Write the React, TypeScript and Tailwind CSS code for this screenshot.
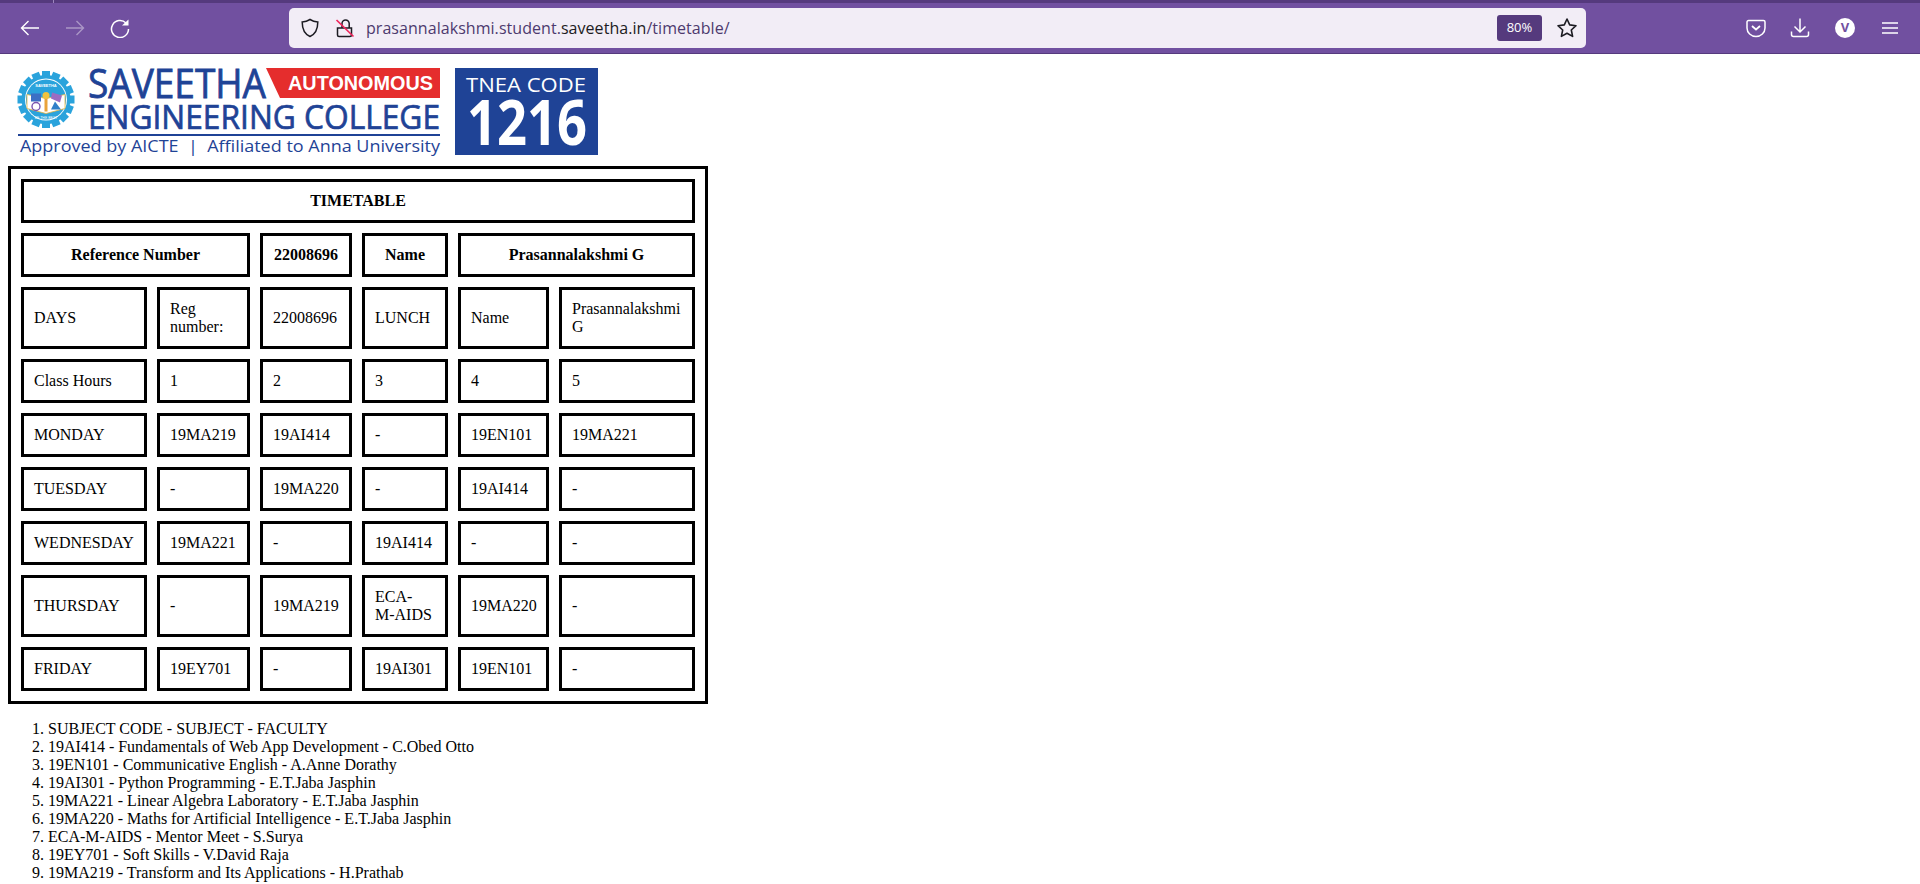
import React from "react";

const rows: React.ReactNode[][] = [
  ["DAYS", "Reg number:", "22008696", "LUNCH", "Name", "Prasannalakshmi G"],
  ["Class Hours", "1", "2", "3", "4", "5"],
  ["MONDAY", "19MA219", "19AI414", "-", "19EN101", "19MA221"],
  ["TUESDAY", "-", "19MA220", "-", "19AI414", "-"],
  ["WEDNESDAY", "19MA221", "-", "19AI414", "-", "-"],
  ["THURSDAY", "-", "19MA219", <>ECA-<br />M-AIDS</>, "19MA220", "-"],
  ["FRIDAY", "19EY701", "-", "19AI301", "19EN101", "-"],
];
const subjects = [
  "SUBJECT CODE - SUBJECT - FACULTY",
  "19AI414 - Fundamentals of Web App Development - C.Obed Otto",
  "19EN101 - Communicative English - A.Anne Dorathy",
  "19AI301 - Python Programming - E.T.Jaba Jasphin",
  "19MA221 - Linear Algebra Laboratory - E.T.Jaba Jasphin",
  "19MA220 - Maths for Artificial Intelligence - E.T.Jaba Jasphin",
  "ECA-M-AIDS - Mentor Meet - S.Surya",
  "19EY701 - Soft Skills - V.David Raja",
  "19MA219 - Transform and Its Applications - H.Prathab",
];
const td = "border-[3px] border-black pl-[10px] pr-[8px] py-[10px] leading-[18px] text-left align-middle";
const th = "border-[3px] border-black px-[8px] py-[10px] leading-[18px] text-center align-middle font-bold";

function Back({ className = "" }: { className?: string }) {
  return (
    <svg width="20" height="20" viewBox="0 0 20 20" fill="none" stroke="currentColor" strokeWidth="1.4" className={className}>
      <path d="M19 10H1.500M8.500 3l-7 7 7 7" />
    </svg>
  );
}

function Logo() {
  const blue = "#1f4396";
  const sky = "#2aa3dc";
  const teeth = Array.from({ length: 16 }, (_, i) => (360 / 16) * i);
  return (
    <svg width="600" height="100" viewBox="0 0 600 100" className="block overflow-visible">
      <g transform="translate(31 33.500)">
        {teeth.map((a) => (
          <rect key={a} x="-4" y="-28.500" width="8" height="8" fill={sky} transform={`rotate(${a})`} />
        ))}
        <circle r="24.500" fill={sky} />
        <circle r="21" fill="#ffffff" />
        <circle r="20" fill={sky} />
        <path d="M-19 -5 L0 -1 L19 -5 L19 9 L0 14 L-19 9Z" fill="#ffffff" stroke="#e9b53f" strokeWidth="0.800" />
        <rect x="-15" y="-6" width="10" height="8" fill="#3c6fc4" />
        <path d="M6 -7l10 3-2 7-9-4z" fill="#9b6cc2" />
        <path d="M-1.500 -3h3v15h-3z" fill="#e9a33a" />
        <circle cy="-4" r="3.500" fill="#f0c23d" />
        <circle cx="-10" cy="7" r="4" fill="none" stroke="#7a55b0" strokeWidth="1.400" />
        <path d="M9 2l6 8H5z" fill="#2f7fc9" />
        <text x="0" y="-13" textAnchor="middle" fontFamily="'Liberation Sans',sans-serif" fontWeight="700" fontSize="4" fill="#fff">SAVEETHA</text>
        <text x="0" y="19" textAnchor="middle" fontFamily="'Liberation Sans',sans-serif" fontSize="3.500" fill="#fff">BE THE BEST</text>
      </g>
      <text x="73" y="32" fontFamily="'Open Sans',sans-serif" fontSize="40" fill={blue} stroke={blue} strokeWidth="0.800" textLength="178" lengthAdjust="spacingAndGlyphs">SAVEETHA</text>
      <path d="M251 2H425V32H265Z" fill="#e52d2d" />
      <text x="273" y="24" fontFamily="'Liberation Sans',sans-serif" fontWeight="700" fontSize="20" fill="#fff" textLength="145" lengthAdjust="spacingAndGlyphs">AUTONOMOUS</text>
      <text x="73" y="63" fontFamily="'Open Sans',sans-serif" fontSize="33" fill={blue} stroke={blue} strokeWidth="0.700" textLength="352" lengthAdjust="spacingAndGlyphs">ENGINEERING COLLEGE</text>
      <rect x="3" y="68" width="422" height="2" fill={blue} />
      <text x="5" y="86" fontFamily="'Open Sans',sans-serif" fontSize="16" fill={blue} textLength="420" lengthAdjust="spacingAndGlyphs">{"Approved by AICTE\u00a0\u00a0|\u00a0\u00a0Affiliated to Anna University"}</text>
      <rect x="440" y="2" width="143" height="87" fill={blue} />
      <text x="451" y="26" fontFamily="'Open Sans',sans-serif" fontSize="20" fill="#fff" textLength="120" lengthAdjust="spacingAndGlyphs">TNEA CODE</text>
      <text x="452" y="79" fontFamily="'Open Sans',sans-serif" fontWeight="700" fontSize="63" fill="#fff" textLength="120" lengthAdjust="spacingAndGlyphs">1216</text>
    </svg>
  );
}

export default function App() {
  return (
    <div className="h-[884px] overflow-hidden bg-white font-['Liberation_Serif',serif] text-[16px] text-black">
      <header className="h-[54px] bg-[#7150a0] border-t-[3px] border-t-[#553a7d] border-b border-b-[#553a7d] flex items-center font-['Open_Sans',sans-serif] relative">
        <div className="absolute left-[53px] top-[-3px] h-[3px] w-px bg-[#9c86bd]" />
        <div className="w-[289px] pl-[20px] flex items-center text-white">
          <Back />
          <Back className="ml-[25px] rotate-180 opacity-40" />
          <svg width="20" height="20" viewBox="0 0 20 20" fill="none" stroke="currentColor" strokeWidth="1.5" className="ml-[25px]">
            <path d="M16 5A8.500 8.500 0 1 0 18.500 11" />
            <path d="M12 7.500H18.500V1.500z" fill="currentColor" stroke="none" />
          </svg>
        </div>
        <div className="w-[1297px] h-[40px] rounded-[5px] bg-[#f2edf6] flex items-center pl-[11px] text-[16px] text-[#4d3a6e]">
          <svg width="20" height="20" viewBox="0 0 20 20" fill="none" stroke="#1c1b22" strokeWidth="1.5">
            <path d="M10 1.500c2.500 1.600 4.800 2.300 7.800 2.500 0 7-1.700 11.800-7.800 14.500C3.900 15.800 2.200 11 2.200 4c3-.2 5.300-.9 7.800-2.500z" />
          </svg>
          <svg width="20" height="20" viewBox="0 0 20 20" fill="none" stroke="#1c1b22" strokeWidth="1.500" className="ml-[15px]">
            <path d="M2.500 10h14v7a1.500 1.500 0 0 1-1.500 1.500H4A1.500 1.500 0 0 1 2.500 17zM7 10V5.500a3.600 3.600 0 0 1 7.200 0V10" />
            <path d="M1.500 2L18.500 18.500" stroke="#f0245a" strokeWidth="1.700" />
          </svg>
          <span className="ml-[11px] whitespace-nowrap tracking-[0.05px]">
            prasannalakshmi.student.<span className="text-[#1c1b22]">saveetha.in</span>/timetable/
          </span>
          <div className="ml-auto h-[26px] w-[45px] rounded-[3px] bg-[#553a7d] text-white text-[13px] flex items-center justify-center">80%</div>
          <svg width="22" height="22" viewBox="0 0 22 22" fill="none" stroke="#1c1b22" strokeWidth="1.600" className="ml-[14px] mr-[8px]">
            <path d="M11 2l2.700 5.900 6.300.8-4.700 4.300 1.300 6.400L11 16.200l-5.600 3.200 1.300-6.400L2 8.700l6.300-.8z" strokeLinejoin="round" />
          </svg>
        </div>
        <div className="flex-1 flex items-center text-white pl-[160px]">
          <svg width="20" height="20" viewBox="0 0 20 20" fill="none" stroke="currentColor" strokeWidth="1.500">
            <path d="M2.500 2.500h15a1.500 1.500 0 0 1 1.500 1.500v6a9 8.500 0 0 1-18 0V4a1.500 1.500 0 0 1 1.500-1.500z" />
            <path d="M6 8l4 3.500L14 8" strokeWidth="1.800" />
          </svg>
          <svg width="20" height="20" viewBox="0 0 20 20" fill="none" stroke="currentColor" strokeWidth="1.500" className="ml-[24px]">
            <path d="M10 0.500v13M4.500 8.500l5.500 5.500 5.500-5.500M1.500 13.500v3a2 2 0 0 0 2 2h13a2 2 0 0 0 2-2v-3" />
          </svg>
          <div className="ml-[25px] h-[20px] w-[20px] rounded-full bg-white text-[#7150a0] text-[13px] font-bold flex items-center justify-center">V</div>
          <svg width="16" height="12" viewBox="0 0 16 12" fill="none" stroke="currentColor" strokeWidth="1.500" className="ml-[27px]">
            <path d="M0 1h16M0 6h16M0 11h16" />
          </svg>
        </div>
      </header>
      <div className="h-[12px]" />
      <div className="h-[100px] pl-[15px]"><Logo /></div>
      <table className="ml-[8px] w-[700px] table-fixed border-separate border-spacing-[10px] border-[3px] border-black">
        <colgroup>
          <col className="w-[126px]" /><col className="w-[93px]" /><col className="w-[92px]" />
          <col className="w-[86px]" /><col className="w-[91px]" /><col className="w-[136px]" />
        </colgroup>
        <tbody>
          <tr><th colSpan={6} className={th}>TIMETABLE</th></tr>
          <tr>
            <th colSpan={2} className={th}>Reference Number</th>
            <th className={th}>22008696</th>
            <th className={th}>Name</th>
            <th colSpan={2} className={th}>Prasannalakshmi G</th>
          </tr>
          {rows.map((r, ri) => (
            <tr key={ri}>{r.map((c, i) => <td key={i} className={td}>{c}</td>)}</tr>
          ))}
        </tbody>
      </table>
      <ol className="mt-[16px] pl-[48px] list-decimal leading-[18px]">
        {subjects.map((s) => <li key={s}>{s}</li>)}
      </ol>
    </div>
  );
}
